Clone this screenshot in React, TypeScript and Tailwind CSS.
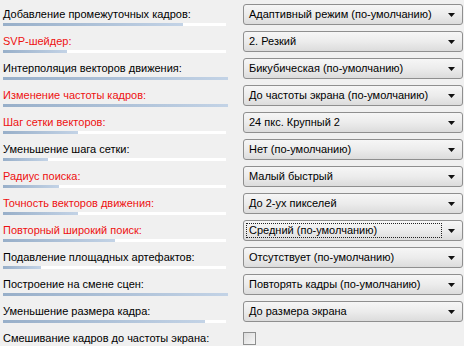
import React from "react"

type Row = {
  label: string
  red?: boolean
  fill?: number // px width of the blue part, 223 = full
  value?: string
  focused?: boolean
  checkbox?: boolean
}

const rows: Row[] = [
  { label: "Добавление промежуточных кадров:", fill: 180, value: "Адаптивный режим (по-умолчанию)" },
  { label: "SVP-шейдер:", red: true, fill: 64, value: "2. Резкий" },
  { label: "Интерполяция векторов движения:", fill: 225, value: "Бикубическая (по-умолчанию)" },
  { label: "Изменение частоты кадров:", red: true, fill: 225, value: "До частоты экрана (по-умолчанию)" },
  { label: "Шаг сетки векторов:", red: true, fill: 75, value: "24 пкс. Крупный 2" },
  { label: "Уменьшение шага сетки:", fill: 45, value: "Нет (по-умолчанию)" },
  { label: "Радиус поиска:", red: true, fill: 56, value: "Малый быстрый" },
  { label: "Точность векторов движения:", red: true, fill: 75, value: "До 2-ух пикселей" },
  { label: "Повторный широкий поиск:", red: true, fill: 112, value: "Средний (по-умолчанию)", focused: true },
  { label: "Подавление площадных артефактов:", fill: 38, value: "Отсутствует (по-умолчанию)" },
  { label: "Построение на смене сцен:", fill: 225, value: "Повторять кадры (по-умолчанию)" },
  { label: "Уменьшение размера кадра:", fill: 202, value: "До размера экрана" },
  { label: "Смешивание кадров до частоты экрана:", checkbox: true },
]

function Combo({ value, focused }: { value: string; focused?: boolean }) {
  return (
    <div className="mt-[4px] h-[21px] w-[220px] flex items-center rounded-[3px] border border-[#8f8f8f] bg-gradient-to-b from-[#f6f6f6] via-[#ececec] to-[#dcdcdc]">
      <div className="flex-1 min-w-0 h-full p-[2px]">
        <div
          className={`h-full flex items-center pl-[2px] whitespace-nowrap overflow-hidden ${focused ? "border border-dotted border-[#222]" : "border border-transparent"}`}
        >
          {value}
        </div>
      </div>
      <svg width="16" height="8" viewBox="0 0 16 8" className="mr-[2px] shrink-0">
        <path d="M4 2 L11 2 L7.5 6 Z" fill="#111" />
      </svg>
    </div>
  )
}

export default function App() {
  return (
    <div
      className="w-[464px] h-[346px] bg-[#f0f0f0] text-[11px] text-black overflow-hidden"
      style={{ fontFamily: '"Liberation Sans", Arial, sans-serif' }}
    >
      {rows.map((row, i) => (
        <div key={i} className="flex h-[27px]">
          <div className="w-[243px] pl-[3px] pt-[7px]">
            <div className={`h-[14px] leading-[14px] whitespace-nowrap ${row.red ? "text-[#ee1111]" : ""}`}>
              {row.label}
            </div>
            {row.fill !== undefined && (
              <div className="mt-[2px] h-[3px] w-[223px] bg-white">
                <div
                  className="h-full bg-gradient-to-r from-[#98afc9] to-[#c3d3e6]"
                  style={{ width: row.fill }}
                />
              </div>
            )}
          </div>
          {row.value && <Combo value={row.value} focused={row.focused} />}
          {row.checkbox && (
            <div className="mt-[8px] h-[13px] w-[13px] border border-[#8e8f8f] bg-gradient-to-br from-[#dcdcdc] to-[#f6f6f6]" />
          )}
        </div>
      ))}
    </div>
  )
}
